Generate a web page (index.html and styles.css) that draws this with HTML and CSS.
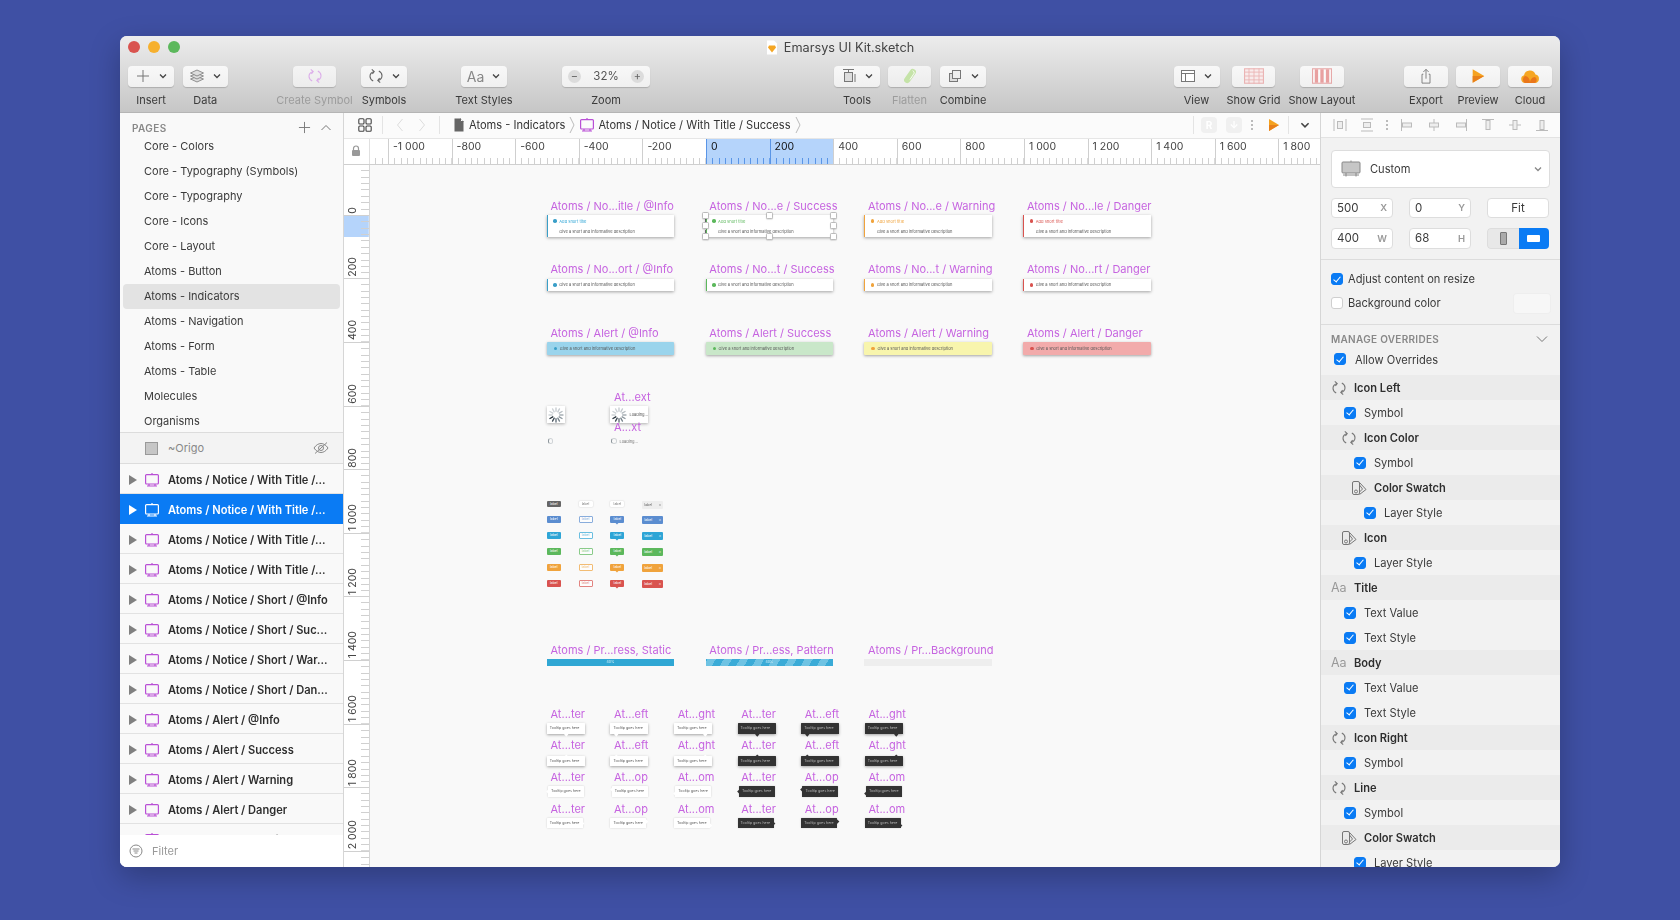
FILE: index.html
```html
<!DOCTYPE html>
<html lang="en">
<head>
<meta charset="utf-8">
<title>Emarsys UI Kit.sketch</title>
<link rel="stylesheet" href="styles.css">
</head>
<body>
<svg class="sprite" width="0" height="0">
  <symbol id="artboard" viewBox="0 0 16 16"><g fill="none" stroke="currentColor" stroke-width="1.2"><rect x="1.6" y="2.6" width="12.8" height="9.4" rx="1"/><path d="M8 1v1.6M3 14h10M5 12v2.5M11 12v2.5"/></g></symbol>
  <symbol id="sym" viewBox="0 0 16 16"><g fill="none" stroke="currentColor" stroke-width="1.1"><path d="M6 3.500C3.400 4.400 2 6.300 2 8.300c0 2 1.300 3.700 3.200 4.700"/><path d="M3.800 1.400 6.200 3.500 4.400 5.800"/><path d="M10 12.500c2.600-.9 4-2.800 4-4.800s-1.300-3.700-3.200-4.700"/><path d="M12.200 14.600 9.800 12.500l1.800-2.300"/></g></symbol>
  <symbol id="swatch" viewBox="0 0 16 16"><g fill="none" stroke="currentColor" stroke-width="1"><rect x="1.500" y="1.500" width="7" height="13" rx="1.500"/><path d="M8.500 2.500 15 9.500l-6.500 5"/><path d="M8.500 5 11.500 9 8.500 12"/><circle cx="5" cy="11.500" r="1.500"/></g></symbol>
  <symbol id="chev" viewBox="0 0 10 10"><path d="M2 3.500 5 6.500 8 3.500" fill="none" stroke="currentColor" stroke-width="1.300"/></symbol>
  <symbol id="spin" viewBox="0 0 24 24"><g stroke-width="2" stroke-linecap="round">
    <path stroke="#c4cacf" d="M12 1.500v5"/><path stroke="#c4cacf" d="m17.200 2.900-2.500 4.300"/><path stroke="#b6bdc2" d="m21.100 6.800-4.300 2.500"/><path stroke="#a6aeb4" d="M22.500 12h-5"/><path stroke="#8f99a0" d="m21.100 17.200-4.300-2.500"/><path stroke="#77838b" d="m17.200 21.100-2.500-4.300"/><path stroke="#5d6a74" d="M12 22.500v-5"/><path stroke="#3f4c56" d="m6.800 21.100 2.500-4.300"/><path stroke="#28343d" d="m2.900 17.200 4.300-2.500"/><path stroke="#cdd2d6" d="M1.500 12h5"/><path stroke="#cdd2d6" d="m2.900 6.800 4.300 2.500"/><path stroke="#cdd2d6" d="m6.800 2.900 2.500 4.300"/></g></symbol>
</svg>

<div class="window">
  <header class="chrome">
    <div class="titlebar">
      <div class="lights"><i class="light red"></i><i class="light yellow"></i><i class="light green"></i></div>
      <div class="title">
        <svg class="doc-ic" viewBox="0 0 12 14"><path d="M1 0h7l3 3v11H1z" fill="#fff"/><path d="M3 5h6l1 2-4 5-4-5z" fill="#f5a623"/></svg>
        <span>Emarsys UI Kit.sketch</span>
      </div>
    </div>
    <div class="tools">
      <div class="tool t-insert"><div class="tbtn"><svg class="ti" viewBox="0 0 16 16"><path d="M8 2v12M2 8h12" stroke="#777" fill="none"/></svg><svg class="tc"><use href="#chev"/></svg></div><span>Insert</span></div>
      <div class="tool t-data"><div class="tbtn"><svg class="ti" viewBox="0 0 16 16"><g fill="#ddd" stroke="#777" stroke-width=".8"><path d="m8 8.500 6.500 2.500L8 14l-6.500-3z"/><path d="m8 5.500 6.500 2.500L8 11 1.500 8z"/><path d="M8 2l6.500 3L8 8 1.500 5z"/></g></svg><svg class="tc"><use href="#chev"/></svg></div><span>Data</span></div>
      <div class="tool t-create off"><div class="tbtn"><svg class="ti pinkic"><use href="#sym"/></svg></div><span>Create Symbol</span></div>
      <div class="tool t-symbols"><div class="tbtn"><svg class="ti grayic"><use href="#sym"/></svg><svg class="tc"><use href="#chev"/></svg></div><span>Symbols</span></div>
      <div class="tool t-text"><div class="tbtn"><b class="aa">Aa</b><svg class="tc"><use href="#chev"/></svg></div><span>Text Styles</span></div>
      <div class="tool t-zoom"><div class="tbtn zoombtn"><i class="zc">−</i><em>32%</em><i class="zc">+</i></div><span>Zoom</span></div>
      <div class="tool t-tools"><div class="tbtn"><svg class="ti" viewBox="0 0 16 16"><g fill="none" stroke="#777"><rect x="3.500" y="4.500" width="8" height="9" fill="#ddd"/><path d="M2 1.500h11M7.500 1.500v3M14 6v8"/></g></svg><svg class="tc"><use href="#chev"/></svg></div><span>Tools</span></div>
      <div class="tool t-flatten off"><div class="tbtn"><svg class="ti big" viewBox="0 0 18 18"><rect x="5.500" y="0" width="7" height="18" rx="3.500" transform="rotate(35 9 9)" fill="#c5e3a8"/><path d="M12 3c2 1 2 3 1 4l-4 6" stroke="#fff" fill="none"/></svg></div><span>Flatten</span></div>
      <div class="tool t-combine"><div class="tbtn"><svg class="ti" viewBox="0 0 16 16"><g fill="#ddd" stroke="#777"><rect x="2.500" y="5.500" width="8" height="8"/><rect x="5.500" y="2.500" width="8" height="8" fill="#eee"/></g></svg><svg class="tc"><use href="#chev"/></svg></div><span>Combine</span></div>
      <div class="tool t-view"><div class="tbtn"><svg class="ti" viewBox="0 0 16 16"><g fill="none" stroke="#777"><rect x="1.500" y="2.500" width="13" height="11" fill="#fff"/><path d="M1.500 5.500h13M5.500 5.500v8"/></g></svg><svg class="tc"><use href="#chev"/></svg></div><span>View</span></div>
      <div class="tool t-grid"><div class="tbtn"><svg class="ti big pale" viewBox="0 0 18 14"><rect x=".500" y=".500" width="17" height="13" fill="#fbe6e6" stroke="#e58a8a"/><path d="M4.500 0v14M9 0v14M13.500 0v14M0 3.500h18M0 7h18M0 10.500h18" stroke="#e58a8a" stroke-width=".8" fill="none"/></svg></div><span>Show Grid</span></div>
      <div class="tool t-layout"><div class="tbtn"><svg class="ti big pale" viewBox="0 0 18 14"><rect x=".500" y=".500" width="17" height="13" fill="#fff" stroke="#d77"/><path d="M2.500 1h3v12h-3zM7.500 1h3v12h-3zM12.500 1h3v12h-3z" fill="#e26a6a"/></svg></div><span>Show Layout</span></div>
      <div class="tool t-export"><div class="tbtn"><svg class="ti big" viewBox="0 0 18 18"><g fill="none" stroke="#777"><path d="M6 7H4.500v10h9V7H12"/><path d="M9 12V1.500M6 4.500l3-3 3 3"/></g></svg></div><span>Export</span></div>
      <div class="tool t-preview"><div class="tbtn"><svg class="ti big" viewBox="0 0 18 18"><path d="M3 1.500 16 9 3 16.500z" fill="#f5a21f"/><path d="M3 9h13L3 16.500z" fill="#e8801a"/></svg></div><span>Preview</span></div>
      <div class="tool t-cloud"><div class="tbtn"><svg class="ti big" viewBox="0 0 20 16"><path d="M5 15a4 4 0 0 1-1-7.800A6 6 0 0 1 15.500 6.500 4.300 4.300 0 0 1 15 15z" fill="#f6a623"/><path d="M5 15a4 4 0 0 1 0-7c3 0 5 3 5 7zM10 15c0-3 2-6 5-6a3.500 3.500 0 0 1 0 6z" fill="#e9761b"/></svg></div><span>Cloud</span></div>
    </div>
  </header>

  <div class="body">
    <aside class="sidebar">
      <div class="pages-head">
        <span>PAGES</span>
        <svg class="ph-plus" viewBox="0 0 14 14"><path d="M7 1v12M1 7h12" stroke="#777" fill="none"/></svg>
        <svg class="ph-up" viewBox="0 0 12 8"><path d="M1.500 6 6 1.500 10.500 6" stroke="#777" fill="none"/></svg>
      </div>
      <div class="pages">
        <ul class="page-list">
          <li>Core - Colors</li>
          <li>Core - Typography (Symbols)</li>
          <li>Core - Typography</li>
          <li>Core - Icons</li>
          <li>Core - Layout</li>
          <li>Atoms - Button</li>
          <li class="cur">Atoms - Indicators</li>
          <li>Atoms - Navigation</li>
          <li>Atoms - Form</li>
          <li>Atoms - Table</li>
          <li>Molecules</li>
          <li>Organisms</li>
        </ul>
      </div>
      <div class="origo">
        <i class="origo-sq"></i><span>~Origo</span>
        <svg class="eye" viewBox="0 0 16 12"><g fill="none" stroke="#888"><path d="M1 6c2-3 4.500-4.500 7-4.500S13 3 15 6c-2 3-4.500 4.500-7 4.500S3 9 1 6z"/><circle cx="8" cy="6" r="2.500"/><path d="M2 11.500 14 .5"/></g></svg>
      </div>
      <ul class="layers">
        <li><i class="tri"></i><svg class="ab"><use href="#artboard"/></svg><span>Atoms / Notice / With Title /...</span></li>
        <li class="on"><i class="tri"></i><svg class="ab"><use href="#artboard"/></svg><span>Atoms / Notice / With Title /...</span></li>
        <li><i class="tri"></i><svg class="ab"><use href="#artboard"/></svg><span>Atoms / Notice / With Title /...</span></li>
        <li><i class="tri"></i><svg class="ab"><use href="#artboard"/></svg><span>Atoms / Notice / With Title /...</span></li>
        <li><i class="tri"></i><svg class="ab"><use href="#artboard"/></svg><span>Atoms / Notice / Short / @Info</span></li>
        <li><i class="tri"></i><svg class="ab"><use href="#artboard"/></svg><span>Atoms / Notice / Short / Suc...</span></li>
        <li><i class="tri"></i><svg class="ab"><use href="#artboard"/></svg><span>Atoms / Notice / Short / War...</span></li>
        <li><i class="tri"></i><svg class="ab"><use href="#artboard"/></svg><span>Atoms / Notice / Short / Dan...</span></li>
        <li><i class="tri"></i><svg class="ab"><use href="#artboard"/></svg><span>Atoms / Alert / @Info</span></li>
        <li><i class="tri"></i><svg class="ab"><use href="#artboard"/></svg><span>Atoms / Alert / Success</span></li>
        <li><i class="tri"></i><svg class="ab"><use href="#artboard"/></svg><span>Atoms / Alert / Warning</span></li>
        <li><i class="tri"></i><svg class="ab"><use href="#artboard"/></svg><span>Atoms / Alert / Danger</span></li>
        <li><i class="tri"></i><svg class="ab"><use href="#artboard"/></svg><span>Atoms / Loader / Default / Text</span></li>
      </ul>
      <div class="filter">
        <svg class="filter-ic" viewBox="0 0 14 14"><g fill="none" stroke="#888"><circle cx="7" cy="7" r="6"/><path d="M3.500 5h7M4.500 7h5M5.500 9h3"/></g></svg>
        <span>Filter</span>
      </div>
    </aside>

    <main class="main">
      <div class="crumbs">
        <svg class="cr-grid" viewBox="0 0 14 14"><g fill="none" stroke="#444" stroke-width="1.100"><rect x=".8" y=".8" width="5.200" height="5.200" rx="1"/><rect x="8" y=".8" width="5.200" height="5.200" rx="1"/><rect x=".8" y="8" width="5.200" height="5.200" rx="1"/><rect x="8" y="8" width="5.200" height="5.200" rx="1"/></g></svg>
        <i class="cr-sep s1"></i>
        <svg class="cr-nav n1" viewBox="0 0 8 14"><path d="M6.500 1 1.500 7l5 6" stroke="#ddd" fill="none"/></svg>
        <svg class="cr-nav n2" viewBox="0 0 8 14"><path d="M1.500 1l5 6-5 6" stroke="#ddd" fill="none"/></svg>
        <i class="cr-sep s2"></i>
        <svg class="cr-doc" viewBox="0 0 10 14"><path d="M.5.500h6l3 3v10H.5z" fill="#666"/><path d="M6.500.500v3h3" fill="#fff" stroke="#666"/></svg>
        <span class="cr-t1">Atoms - Indicators</span>
        <svg class="cr-arrow" viewBox="0 0 6 18"><path d="M1 1l4 8-4 8" stroke="#bbb" fill="none"/></svg>
        <svg class="cr-ab"><use href="#artboard"/></svg>
        <span class="cr-t2">Atoms / Notice / With Title / Success</span>
        <svg class="cr-arrow" viewBox="0 0 6 18"><path d="M1 1l4 8-4 8" stroke="#bbb" fill="none"/></svg>
        <div class="cr-right">
          <i class="cr-sep"></i>
          <b class="ghost g1">R</b>
          <b class="ghost g2">↓</b>
          <i class="vdots"></i>
          <svg class="cr-play" viewBox="0 0 12 14"><path d="M1 1l10 6-10 6z" fill="#f5a21f"/><path d="M1 7h10L1 13z" fill="#e8801a"/></svg>
          <i class="cr-sep s3"></i>
          <svg class="cr-chev"><use href="#chev"/></svg>
        </div>
      </div>

      <div class="hruler">
        <div class="lock"><svg viewBox="0 0 10 12"><path d="M2.500 5V3.500a2.500 2.500 0 0 1 5 0V5" fill="none" stroke="#999" stroke-width="1.200"/><rect x="1" y="5" width="8" height="6" rx="1" fill="#999"/></svg></div>
        <div class="rc stub"></div>
        <div class="rc">-1 000</div><div class="rc">-800</div><div class="rc">-600</div><div class="rc">-400</div><div class="rc">-200</div>
        <div class="rc sel">0</div><div class="rc sel">200</div>
        <div class="rc">400</div><div class="rc">600</div><div class="rc">800</div><div class="rc">1 000</div><div class="rc">1 200</div><div class="rc">1 400</div><div class="rc">1 600</div><div class="rc">1 800</div>
      </div>

      <div class="stage">
        <div class="vruler">
          <div class="vc first"><span>0</span></div>
          <div class="vc sel"><span>200</span></div>
          <div class="vc"><span>400</span></div>
          <div class="vc"><span>600</span></div>
          <div class="vc"><span>800</span></div>
          <div class="vc"><span>1 000</span></div>
          <div class="vc"><span>1 200</span></div>
          <div class="vc"><span>1 400</span></div>
          <div class="vc"><span>1 600</span></div>
          <div class="vc"><span>1 800</span></div>
          <div class="vc"><span>2 000</span></div>
          <div class="vc"></div>
        </div>

        <div class="canvas">
          <div class="brow">
            <div class="bcol"><p class="lbl">Atoms / No...itle / @Info</p><div class="notice tall info"><b class="dot"></b><div class="ntx"><em>Add short title</em><span>Give a short and informative description</span></div></div></div>
            <div class="bcol"><p class="lbl">Atoms / No...e / Success</p><div class="notice tall ok selbox"><b class="dot"></b><div class="ntx"><em>Add short title</em><span>Give a short and informative description</span></div>
              <i class="h h1"></i><i class="h h2"></i><i class="h h3"></i><i class="h h4"></i><i class="h h5"></i><i class="h h6"></i><i class="h h7"></i><i class="h h8"></i></div></div>
            <div class="bcol"><p class="lbl">Atoms / No...e / Warning</p><div class="notice tall warn"><b class="dot"></b><div class="ntx"><em>Add short title</em><span>Give a short and informative description</span></div></div></div>
            <div class="bcol"><p class="lbl">Atoms / No...le / Danger</p><div class="notice tall bad"><b class="dot"></b><div class="ntx"><em>Add short title</em><span>Give a short and informative description</span></div></div></div>
          </div>
          <div class="brow">
            <div class="bcol"><p class="lbl">Atoms / No...ort / @Info</p><div class="notice info"><b class="dot"></b><span>Give a short and informative description</span></div></div>
            <div class="bcol"><p class="lbl">Atoms / No...t / Success</p><div class="notice ok"><b class="dot"></b><span>Give a short and informative description</span></div></div>
            <div class="bcol"><p class="lbl">Atoms / No...t / Warning</p><div class="notice warn"><b class="dot"></b><span>Give a short and informative description</span></div></div>
            <div class="bcol"><p class="lbl">Atoms / No...rt / Danger</p><div class="notice bad"><b class="dot"></b><span>Give a short and informative description</span></div></div>
          </div>
          <div class="brow">
            <div class="bcol"><p class="lbl">Atoms / Alert / @Info</p><div class="notice alert info"><b class="dot"></b><span>Give a short and informative description</span></div></div>
            <div class="bcol"><p class="lbl">Atoms / Alert / Success</p><div class="notice alert ok"><b class="dot"></b><span>Give a short and informative description</span></div></div>
            <div class="bcol"><p class="lbl">Atoms / Alert / Warning</p><div class="notice alert warn"><b class="dot"></b><span>Give a short and informative description</span></div></div>
            <div class="bcol"><p class="lbl">Atoms / Alert / Danger</p><div class="notice alert bad"><b class="dot"></b><span>Give a short and informative description</span></div></div>
          </div>

          <div class="loaders">
            <div class="lcol first">
              <div class="lbox"><svg class="spin"><use href="#spin"/></svg></div>
              <div class="lsmall"><i class="ring"></i></div>
            </div>
            <div class="lcol">
              <p class="lbl">At...ext</p>
              <div class="lbox wide"><svg class="spin"><use href="#spin"/></svg><span>Loading...</span></div>
              <p class="lbl after">A...xt</p>
              <div class="lsmall"><i class="ring"></i><span>Loading...</span></div>
            </div>
          </div>

          <div class="tags">
            <b class="tag gray">label</b><b class="tag plain">label</b><b class="tag plain">label</b><b class="tag big lite">label<i>×</i></b>
            <b class="tag blue">label</b><b class="tag line blue-l">label</b><b class="tag blue pin">label</b><b class="tag big blue">label<i>×</i></b>
            <b class="tag cyan">label</b><b class="tag line cyan-l">label</b><b class="tag cyan pin">label</b><b class="tag big cyan">label<i>×</i></b>
            <b class="tag green">label</b><b class="tag line green-l">label</b><b class="tag green pin">label</b><b class="tag big green">label<i>×</i></b>
            <b class="tag orange">label</b><b class="tag line orange-l">label</b><b class="tag orange pin">label</b><b class="tag big orange">label<i>×</i></b>
            <b class="tag red">label</b><b class="tag line red-l">label</b><b class="tag red pin">label</b><b class="tag big red">label<i>×</i></b>
          </div>

          <div class="brow prog">
            <div class="bcol"><p class="lbl">Atoms / Pr...ress, Static</p><div class="bar">40%</div></div>
            <div class="bcol"><p class="lbl">Atoms / Pr...ess, Pattern</p><div class="bar stripes">40%</div></div>
            <div class="bcol"><p class="lbl">Atoms / Pr...Background</p><div class="bar empty"></div></div>
          </div>

          <div class="tips">
            <div class="tc1 r1"><p class="lbl">At...ter</p><div class="tip b-c">Tooltip goes here</div></div>
            <div class="tc1 r1"><p class="lbl">At...eft</p><div class="tip b-l">Tooltip goes here</div></div>
            <div class="tc1 r1"><p class="lbl">At...ght</p><div class="tip b-r">Tooltip goes here</div></div>
            <div class="tc1 r1"><p class="lbl">At...ter</p><div class="tip dark b-c">Tooltip goes here</div></div>
            <div class="tc1 r1"><p class="lbl">At...eft</p><div class="tip dark b-l">Tooltip goes here</div></div>
            <div class="tc1 r1"><p class="lbl">At...ght</p><div class="tip dark b-r">Tooltip goes here</div></div>

            <div class="tc1 r2"><p class="lbl">At...ter</p><div class="tip u-c">Tooltip goes here</div></div>
            <div class="tc1 r2"><p class="lbl">At...eft</p><div class="tip u-l">Tooltip goes here</div></div>
            <div class="tc1 r2"><p class="lbl">At...ght</p><div class="tip u-r">Tooltip goes here</div></div>
            <div class="tc1 r2"><p class="lbl">At...ter</p><div class="tip dark u-c">Tooltip goes here</div></div>
            <div class="tc1 r2"><p class="lbl">At...eft</p><div class="tip dark u-l">Tooltip goes here</div></div>
            <div class="tc1 r2"><p class="lbl">At...ght</p><div class="tip dark u-r">Tooltip goes here</div></div>

            <div class="tc1 r3"><p class="lbl">At...ter</p><div class="tip l-c">Tooltip goes here</div></div>
            <div class="tc1 r3"><p class="lbl">At...op</p><div class="tip l-t">Tooltip goes here</div></div>
            <div class="tc1 r3"><p class="lbl">At...om</p><div class="tip l-b">Tooltip goes here</div></div>
            <div class="tc1 r3"><p class="lbl">At...ter</p><div class="tip dark l-c">Tooltip goes here</div></div>
            <div class="tc1 r3"><p class="lbl">At...op</p><div class="tip dark l-t">Tooltip goes here</div></div>
            <div class="tc1 r3"><p class="lbl">At...om</p><div class="tip dark l-b">Tooltip goes here</div></div>

            <div class="tc1 r4"><p class="lbl">At...ter</p><div class="tip x-c">Tooltip goes here</div></div>
            <div class="tc1 r4"><p class="lbl">At...op</p><div class="tip x-t">Tooltip goes here</div></div>
            <div class="tc1 r4"><p class="lbl">At...om</p><div class="tip x-b">Tooltip goes here</div></div>
            <div class="tc1 r4"><p class="lbl">At...ter</p><div class="tip dark x-c">Tooltip goes here</div></div>
            <div class="tc1 r4"><p class="lbl">At...op</p><div class="tip dark x-t">Tooltip goes here</div></div>
            <div class="tc1 r4"><p class="lbl">At...om</p><div class="tip dark x-b">Tooltip goes here</div></div>
          </div>
        </div>
      </div>
    </main>

    <aside class="inspector">
      <div class="alignbar">
        <svg class="al a1" viewBox="0 0 14 14"><path d="M1 1v12M13 1v12" stroke="#bbb" fill="none"/><rect x="4.500" y="3.500" width="5" height="7" fill="#eee" stroke="#bbb"/></svg>
        <svg class="al a2" viewBox="0 0 14 14"><path d="M1 1h12M1 13h12" stroke="#bbb" fill="none"/><rect x="3.500" y="4.500" width="7" height="5" fill="#eee" stroke="#bbb"/></svg>
        <i class="vdots a3"></i>
        <svg class="al a4" viewBox="0 0 14 14"><path d="M1.500 1v12" stroke="#bbb"/><rect x="2.500" y="5" width="9" height="4" fill="#eee" stroke="#bbb"/></svg>
        <svg class="al a5" viewBox="0 0 14 14"><path d="M7 1v12" stroke="#bbb"/><rect x="2.500" y="5" width="9" height="4" fill="#eee" stroke="#bbb"/></svg>
        <svg class="al a6" viewBox="0 0 14 14"><path d="M12.500 1v12" stroke="#bbb"/><rect x="2.500" y="5" width="9" height="4" fill="#eee" stroke="#bbb"/></svg>
        <svg class="al a7" viewBox="0 0 14 14"><path d="M1 1.500h12" stroke="#bbb"/><rect x="5" y="2.500" width="4" height="9" fill="#eee" stroke="#bbb"/></svg>
        <svg class="al a8" viewBox="0 0 14 14"><path d="M1 7h12" stroke="#bbb"/><rect x="5" y="2.500" width="4" height="9" fill="#eee" stroke="#bbb"/></svg>
        <svg class="al a9" viewBox="0 0 14 14"><path d="M1 12.500h12" stroke="#bbb"/><rect x="5" y="2.500" width="4" height="9" fill="#eee" stroke="#bbb"/></svg>
      </div>
      <div class="props">
        <div class="preset">
          <svg class="preset-ic" viewBox="0 0 20 18"><rect x="1" y="2" width="18" height="11" rx="1" fill="#c6c6c6" stroke="#888"/><path d="M10 .5V2M2 15h16M5 13v3.500M15 13v3.500" stroke="#888" fill="none"/></svg>
          <span>Custom</span>
          <svg class="preset-ch"><use href="#chev"/></svg>
        </div>
        <div class="grid3">
          <div class="field"><span>500</span><i>X</i></div>
          <div class="field"><span>0</span><i>Y</i></div>
          <div class="field fit">Fit</div>
          <div class="field"><span>400</span><i>W</i></div>
          <div class="field"><span>68</span><i>H</i></div>
          <div class="seg"><span class="seg-a"><i></i></span><span class="seg-b"><i></i></span></div>
        </div>
      </div>
      <div class="opts">
        <div class="opt"><i class="cb on"></i><span>Adjust content on resize</span></div>
        <div class="opt"><i class="cb"></i><span>Background color</span><b class="bgsw"></b></div>
      </div>
      <div class="ov-head"><span>MANAGE OVERRIDES</span><svg viewBox="0 0 12 8"><path d="M1 1.500 6 6.500 11 1.500" stroke="#777" fill="none"/></svg></div>
      <div class="allow"><i class="cb on"></i><span>Allow Overrides</span></div>
      <div class="ov-list">
        <div class="hd"><svg class="hi"><use href="#sym"/></svg><b>Icon Left</b></div>
        <div class="ck l1"><i class="cb on"></i><span>Symbol</span></div>
        <div class="hd l1"><svg class="hi"><use href="#sym"/></svg><b>Icon Color</b></div>
        <div class="ck l2"><i class="cb on"></i><span>Symbol</span></div>
        <div class="hd l2"><svg class="hi"><use href="#swatch"/></svg><b>Color Swatch</b></div>
        <div class="ck l3"><i class="cb on"></i><span>Layer Style</span></div>
        <div class="hd l1"><svg class="hi"><use href="#swatch"/></svg><b>Icon</b></div>
        <div class="ck l2"><i class="cb on"></i><span>Layer Style</span></div>
        <div class="hd"><em class="hi-aa">Aa</em><b>Title</b></div>
        <div class="ck l1"><i class="cb on"></i><span>Text Value</span></div>
        <div class="ck l1"><i class="cb on"></i><span>Text Style</span></div>
        <div class="hd"><em class="hi-aa">Aa</em><b>Body</b></div>
        <div class="ck l1"><i class="cb on"></i><span>Text Value</span></div>
        <div class="ck l1"><i class="cb on"></i><span>Text Style</span></div>
        <div class="hd"><svg class="hi"><use href="#sym"/></svg><b>Icon Right</b></div>
        <div class="ck l1"><i class="cb on"></i><span>Symbol</span></div>
        <div class="hd"><svg class="hi"><use href="#sym"/></svg><b>Line</b></div>
        <div class="ck l1"><i class="cb on"></i><span>Symbol</span></div>
        <div class="hd l1"><svg class="hi"><use href="#swatch"/></svg><b>Color Swatch</b></div>
        <div class="ck l2"><i class="cb on"></i><span>Layer Style</span></div>
      </div>
    </aside>
  </div>
</div>
</body>
</html>
```

FILE: styles.css
```css
* { box-sizing: border-box; margin: 0; padding: 0; }
html, body { height: 100%; overflow: hidden; }
body {
  background: #3f50a4;
  font-family: Inter, "Noto Sans", "Liberation Sans", sans-serif;
  color: #333;
}
.sprite { position: absolute; }
i, em, b { font-style: normal; }
ul { list-style: none; }

.window {
  width: 1440px; height: 831px;
  margin: 36px 0 0 120px;
  border-radius: 7px;
  overflow: hidden;
  display: flex; flex-direction: column;
  background: #f9f9f9;
  box-shadow: 0 10px 30px rgba(0,0,0,.25);
  filter: blur(.3px);
}

/* chrome */
.chrome {
  height: 76.500px; flex: none;
  background: linear-gradient(#ececec, #c6c6c6);
  border-bottom: 1px solid #b5b5b5;
}
.titlebar { height: 29.500px; position: relative; display: flex; justify-content: center; }
.lights { position: absolute; left: 8px; top: 5px; display: flex; gap: 8px; }
.light { width: 12px; height: 12px; border-radius: 50%; }
.red { background: #f0524f; } .yellow { background: #f6b02e; } .green { background: #29c041; }
.title { display: flex; align-items: center; gap: 6px; height: 22px; font-size: 12.700px; color: #444; margin-left: 0; }
.doc-ic { width: 12px; height: 15px; }

.tools { display: flex; padding-left: 8px; }
.tool { display: flex; flex-direction: column; align-items: center; flex: none; font-size: 11px; color: #3a3a3a; }
.tool > span { margin-top: 6px; line-height: 14px; white-space: nowrap; }
.tool.off > span { color: #9c9c9c; }
.tbtn {
  width: 100%; height: 21.500px;
  display: flex; align-items: center; justify-content: center; gap: 7px;
  background: linear-gradient(#f8f8f8, #f0f0f0);
  border-radius: 4px;
  box-shadow: 0 1px 1px rgba(0,0,0,.18);
}
.off .tbtn { background: linear-gradient(#f4f4f4, #ececec); }
.ti { width: 16px; height: 16px; }
.ti.big { width: 20px; height: 16px; }
.ti.pale { opacity: .6; }
.tc { width: 10px; height: 10px; color: #444; }
.pinkic { color: #dcaeea; }
.grayic { color: #666; }
.aa { font-weight: 400; font-size: 14px; color: #888; }
.zoombtn { justify-content: space-between; padding: 0 6px; font-size: 11.500px; color: #555; }
.zc { width: 13px; height: 13px; line-height: 12px; border-radius: 50%; background: #dcdcdc; text-align: center; font-size: 11px; color: #666; }
.t-insert { width: 46px; }
.t-data { width: 45.500px; margin-left: 8.500px; }
.t-create { width: 43px; margin-left: 65px; }
.t-symbols { width: 46px; margin-left: 25px; }
.t-text { width: 46px; margin-left: 54px; }
.t-zoom { width: 88px; margin-left: 55px; }
.t-tools { width: 46px; margin-left: 184px; }
.t-flatten { width: 43px; margin-left: 8px; }
.t-combine { width: 46px; margin-left: 9px; }
.t-view { width: 46px; margin-left: 187.500px; }
.t-grid { width: 43px; margin-left: 12.500px; }
.t-layout { width: 44px; margin-left: 25px; }
.t-export { width: 44px; margin-left: 60px; }
.t-preview { width: 44px; margin-left: 8px; }
.t-cloud { width: 44px; margin-left: 8px; }

.body { flex: 1; display: flex; min-height: 0; }

/* sidebar */
.sidebar {
  width: 224px; flex: none;
  display: flex; flex-direction: column;
  background: #f9f9f9;
  border-right: 1px solid #d6d6d6;
}
.pages-head {
  height: 27.500px; flex: none;
  display: flex; align-items: center;
  padding: 3px 0 0 12px;
  font-size: 10px; font-weight: 600; color: #888; letter-spacing: .4px;
}
.pages-head span { flex: 1; }
.ph-plus { width: 13px; height: 13px; margin-right: 9px; }
.ph-up { width: 12px; height: 8px; margin-right: 11px; }
.pages { height: 292px; flex: none; overflow: hidden; }
.page-list { margin-top: -6.500px; padding: 0 3px; }
.page-list li { height: 25px; line-height: 25px; padding-left: 21px; font-size: 11px; color: #3a3a3a; border-radius: 4px; }
.page-list li.cur { background: #e3e3e3; }
.origo {
  height: 32px; flex: none;
  display: flex; align-items: center;
  background: #f3f3f3;
  border-top: 1px solid #dcdcdc; border-bottom: 1px solid #dcdcdc;
  padding-left: 25px;
  font-size: 11px; color: #888;
}
.origo-sq { width: 13px; height: 13px; background: #c6c6c6; border: 1px solid #999; margin-right: 10px; }
.origo span { flex: 1; }
.eye { width: 16px; height: 12px; margin-right: 14px; }
.layers { flex: 1; overflow: hidden; min-height: 0; }
.layers li {
  height: 30px; flex: none;
  display: flex; align-items: center;
  padding: 2px 0 0 9px;
  border-bottom: 1px solid #e2e2e2;
  font-size: 11.100px; font-weight: 600; color: #2e2e2e; white-space: nowrap;
}
.tri { width: 0; height: 0; border-left: 8px solid #808080; border-top: 5px solid transparent; border-bottom: 5px solid transparent; margin-right: 7px; }
.ab { width: 16px; height: 16px; color: #b94fd6; margin-right: 8px; }
.layers li.on { background: #0a7bf4; color: #fff; border-bottom-color: #0a7bf4; }
.layers li.on .tri { border-left-color: #fff; }
.layers li.on .ab { color: #fff; }
.filter {
  height: 32px; flex: none; background: #fff;
  display: flex; align-items: center; padding-left: 9px;
  font-size: 11px; color: #999;
}
.filter-ic { width: 14px; height: 14px; margin-right: 9px; }

/* main */
.main { flex: 1; min-width: 0; display: flex; flex-direction: column; }
.crumbs {
  height: 25px; flex: none;
  display: flex; align-items: center;
  background: #fbfbfb;
  font-size: 11.100px; color: #333; white-space: nowrap;
  padding-left: 14px;
}
.cr-grid { width: 14px; height: 14px; }
.cr-sep { width: 1px; height: 18px; background: #e4e4e4; }
.s1 { margin-left: 10px; }
.cr-nav { width: 8px; height: 14px; }
.n1 { margin-left: 13px; }
.n2 { margin-left: 14px; }
.s2 { margin-left: 13px; }
.cr-doc { width: 10px; height: 14px; margin-left: 14px; }
.cr-t1 { margin-left: 5px; }
.cr-arrow { width: 6px; height: 18px; margin-left: 4px; }
.cr-ab { width: 16px; height: 16px; color: #b94fd6; margin-left: 4px; }
.cr-t2 { margin-left: 3px; }
.cr-right { margin-left: auto; display: flex; align-items: center; height: 100%; padding-right: 9px; }
.ghost { width: 16px; height: 16px; background: #f0f0f0; border-radius: 4px; color: #fff; font-size: 10px; text-align: center; line-height: 16px; }
.g1 { margin-left: 7px; }
.g2 { margin-left: 9px; }
.vdots { width: 2px; height: 10px; background: repeating-linear-gradient(#bbb 0 2px, transparent 2px 4px); margin-left: 9px; }
.cr-play { width: 12px; height: 14px; margin-left: 15px; }
.s3 { margin-left: 8px; }
.cr-chev { width: 12px; height: 12px; color: #444; margin-left: 10px; }

.hruler {
  height: 27px; flex: none;
  display: flex;
  background: #fff;
  border-top: 1px solid #e6e6e6; border-bottom: 1px solid #cfcfcf;
  overflow: hidden;
}
.lock { width: 25.500px; flex: none; display: flex; align-items: center; justify-content: center; border-right: 1px solid #e0e0e0; }
.lock svg { width: 10px; height: 12px; }
.rc {
  width: 63.600px; flex: none;
  padding: 1px 0 0 4px;
  font-size: 10.500px; line-height: 14px; color: #444; white-space: nowrap;
  border-left: 1px solid #cfcfcf;
  background: repeating-linear-gradient(to right, transparent 0 5.360px, #d0d0d0 5.360px 6.360px) bottom / 100% 6px no-repeat;
}
.rc.stub { width: 18.500px; border-left: 0; }
.rc.sel {
  color: #111;
  border-left-color: #5a95e6;
  background: repeating-linear-gradient(to right, transparent 0 5.360px, #5a95e6 5.360px 6.360px) bottom / 100% 6px no-repeat, #b5d4fb;
}

.stage { flex: 1; min-height: 0; display: flex; }
.vruler { width: 25.500px; flex: none; background: #fff; border-right: 1px solid #d6d6d6; overflow: hidden; }
.vc {
  height: 63.600px; position: relative;
  display: flex; align-items: flex-end; padding: 0 0 1.500px 2px;
  font-size: 10.500px; color: #444;
  border-bottom: 1px solid #d0d0d0;
  background: repeating-linear-gradient(transparent 0 5.360px, #d0d0d0 5.360px 6.360px) right / 8px 100% no-repeat;
}
.vc.first { height: 51.300px; }
.vc span { writing-mode: vertical-rl; transform: rotate(180deg); line-height: 14px; white-space: nowrap; }
.vc.sel {
  background: repeating-linear-gradient(transparent 0 5.360px, #d0d0d0 5.360px 6.360px) right / 8px 100% no-repeat,
              linear-gradient(#b5d4fb, #b5d4fb) top / 100% 21px no-repeat;
}

/* canvas */
.canvas { flex: 1; min-width: 0; overflow: hidden; background: #f9f9f9; padding: 34px 0 0 177.300px; }
.lbl { font-size: 11px; line-height: 14px; color: #c664e0; padding-left: 3.700px; white-space: nowrap; }
.brow { height: 63.700px; display: flex; }
.bcol { width: 158.800px; flex: none; }
.notice {
  width: 127.500px; height: 12.500px; margin-top: 2.500px; position: relative;
  display: flex; align-items: center; gap: 2.500px;
  padding-left: 5.500px;
  background: #fff;
  border-left: 1.500px solid #888;
  box-shadow: 0 1px 3px rgba(0,0,0,.35);
  font-size: 4px; color: #555; white-space: nowrap;
}
.notice.tall { height: 21.500px; align-items: flex-start; padding-top: 4px; }
.ntx { display: flex; flex-direction: column; gap: 4.500px; }
.ntx em { font-size: 4.100px; }
.dot { width: 3.500px; height: 3.500px; border-radius: 50%; background: #888; flex: none; }
.info { border-left-color: #3a9fc8; } .info .dot { background: #3a9fc8; } .info em { color: #2ea5d6; }
.ok { border-left-color: #5cb85c; } .ok .dot { background: #5cb85c; } .ok em { color: #5cb85c; }
.warn { border-left-color: #f0a33c; } .warn .dot { background: #f0a33c; } .warn em { color: #f0a33c; }
.bad { border-left-color: #d9534f; } .bad .dot { background: #d9534f; } .bad em { color: #d9534f; }
.alert { border-left: 0; padding-left: 7px; border-radius: 1px; }
.alert.info { background: #9ad4ec; }
.alert.ok { background: #c9e7c9; }
.alert.warn { background: #f8f5ad; }
.alert.bad { background: #f2abab; }
.h {
  position: absolute; width: 7px; height: 7px; border-radius: 1.500px;
  background: #fff; border: 1px solid #bbb; box-shadow: 0 .5px 1px rgba(0,0,0,.2);
}
.h1 { left: -5px; top: -3.500px; } .h2 { left: 59px; top: -3.500px; } .h3 { right: -3.500px; top: -3.500px; }
.h4 { left: -5px; top: 7.250px; } .h5 { right: -3.500px; top: 7.250px; }
.h6 { left: -5px; bottom: -3.500px; } .h7 { left: 59px; bottom: -3.500px; } .h8 { right: -3.500px; bottom: -3.500px; }
.selbox::before, .selbox::after { content: ""; position: absolute; left: -2px; width: 1px; height: 3px; background: #666; }
.selbox::before { top: 3.500px; }
.selbox::after { top: 14.500px; }

.loaders { height: 106.500px; display: flex; }
.lcol { width: 63.600px; flex: none; }
.lcol.first { padding-top: 16.500px; }
.lbox { width: 18px; height: 17px; background: #fff; box-shadow: 0 1px 3px rgba(0,0,0,.3); display: flex; align-items: center; padding-left: 1px; font-size: 4px; color: #555; }
.lcol > .lbl + .lbox { margin-top: 2.500px; }
.lbox.wide { width: 37.500px; gap: 2px; }
.spin { width: 16px; height: 16px; flex: none; }
.lbl.after { margin-top: -3px; }
.lsmall { display: flex; align-items: center; gap: 2.500px; height: 7px; margin-top: 14.500px; font-size: 4px; color: #777; padding-left: 1px; }
.lbl.after + .lsmall { margin-top: 3.500px; }
.ring { width: 5.500px; height: 5.500px; border-radius: 50%; border: 1px solid #cfd3d6; border-left-color: #8d969c; flex: none; }

.tags { display: grid; grid-template-columns: repeat(4, 31.800px); grid-auto-rows: 15.900px; height: 146.500px; align-items: start; }
.tag { width: 14px; height: 6.500px; margin-top: 4.500px; border-radius: 1px; font-size: 3.400px; font-weight: 400; line-height: 6.500px; text-align: center; color: #fff; position: relative; }
.tag.big { width: 21px; height: 8px; line-height: 8px; margin-top: 4.500px; display: flex; justify-content: space-between; padding: 0 2px; font-size: 3.600px; }
.gray { background: #666; }
.plain { background: #fff; color: #777; box-shadow: 0 0 1.500px rgba(0,0,0,.25); }
.lite { background: #eee; color: #666; }
.blue { background: #5b8dd0; } .cyan { background: #2ea5d6; } .green { background: #5cb85c; } .orange { background: #f0a33c; } .red { background: #d9534f; }
.line { background: #fff; border: .5px solid; line-height: 5.500px; opacity: .7; }
.blue-l { color: #5b8dd0; } .cyan-l { color: #2ea5d6; } .green-l { color: #5cb85c; } .orange-l { color: #f0a33c; } .red-l { color: #d9534f; }
.pin::after { content: ""; position: absolute; left: 6px; bottom: -1px; width: 2px; height: 2px; background: inherit; transform: rotate(45deg); }

.prog { height: 64px; }
.bar { width: 127.500px; height: 6.500px; margin-top: 2.500px; background: #30a7d4; color: #d8f0f8; font-size: 3.500px; line-height: 6.500px; text-align: center; }
.stripes { background: repeating-linear-gradient(-60deg, #3aabd7 0 7px, #6fc3e3 7px 14px); }
.bar.empty { background: #eeeeee; }

.tips { display: grid; grid-template-columns: repeat(6, 63.600px); grid-auto-rows: 31.800px; }
.tc1 { position: relative; }
.tip {
  position: relative; width: 38px; height: 11px; margin-top: 2.500px;
  background: #fff; color: #555;
  font-size: 3.600px; line-height: 11px; padding-left: 3px; white-space: nowrap;
  box-shadow: 0 1px 3px rgba(0,0,0,.35);
  border-radius: .5px;
}
.tip.dark { background: #333; color: #bbb; }
.r2 .tip { margin-top: 3.500px; height: 10px; line-height: 10px; }
.r3 .tip { width: 36px; height: 10.500px; line-height: 10.500px; margin: 2px 0 0 1.300px; padding-left: 3px; box-shadow: 0 0 2px rgba(0,0,0,.2); }
.r4 .tip { width: 36px; height: 10px; line-height: 10px; margin-top: 2.500px; box-shadow: 0 0 2px rgba(0,0,0,.2); }
.tip::after { content: ""; position: absolute; width: 2.500px; height: 2.500px; background: inherit; transform: rotate(45deg); }
.b-c::after { bottom: -1.200px; left: 18px; } .b-l::after { bottom: -1.200px; left: 5px; } .b-r::after { bottom: -1.200px; right: 5px; }
.u-c::after { top: -1.200px; left: 18px; } .u-l::after { top: -1.200px; left: 5px; } .u-r::after { top: -1.200px; right: 5px; }
.l-c::after { left: -1.200px; top: 4px; } .l-t::after { left: -1.200px; top: 2px; } .l-b::after { left: -1.200px; top: 6px; }
.x-c::after { right: -1.200px; top: 4px; } .x-t::after { right: -1.200px; top: 2px; } .x-b::after { right: -1.200px; top: 6px; }

/* inspector */
.inspector {
  width: 240px; flex: none;
  background: #f2f2f2;
  border-left: 1px solid #d6d6d6;
  display: flex; flex-direction: column; overflow: hidden;
  font-size: 11.100px; color: #3a3a3a;
}
.alignbar {
  height: 25px; flex: none;
  display: flex; align-items: center;
  background: #fbfbfb;
  border-bottom: 1px solid #e3e3e3;
  padding-left: 12px;
}
.al { width: 14px; height: 14px; flex: none; }
.a2 { margin-left: 13px; }
.a3 { margin-left: 12px; flex: none; }
.a4 { margin-left: 12px; }
.a5, .a6, .a7, .a8, .a9 { margin-left: 13px; }
.props { padding: 12px 10px 0 10px; }
.preset {
  height: 38px;
  display: flex; align-items: center;
  background: #fff; border: 1px solid #ddd; border-radius: 4px;
  padding-left: 9px;
}
.preset-ic { width: 20px; height: 18px; margin-right: 9px; }
.preset span { flex: 1; }
.preset-ch { width: 10px; height: 10px; color: #888; margin-right: 6px; }
.grid3 { display: grid; grid-template-columns: 62px 62px 62px; column-gap: 16px; row-gap: 10px; margin-top: 10px; }
.field {
  height: 20.500px;
  display: flex; align-items: center; justify-content: space-between;
  background: #fff; border: 1px solid #ddd; border-radius: 4px;
  padding: 0 5px;
  font-size: 11.500px;
}
.field i { font-size: 9.500px; font-weight: 600; color: #999; }
.field.fit { justify-content: center; }
.seg { display: flex; height: 21px; border-radius: 4px; overflow: hidden; }
.seg span { flex: 1; display: flex; align-items: center; justify-content: center; }
.seg-a { background: #e8e8e8; border: 1px solid #ddd; border-right: 0; border-radius: 4px 0 0 4px; }
.seg-a i { width: 7px; height: 13px; background: #aaa; border: 1px solid #777; border-radius: 1px; }
.seg-b { background: #0a7bf4; }
.seg-b i { width: 13px; height: 7px; background: #fff; border-radius: 1px; }
.opts { margin-top: 10px; border-top: 1px solid #dcdcdc; border-bottom: 1px solid #dcdcdc; padding: 7px 0 9px 10px; }
.opt { height: 24px; display: flex; align-items: center; gap: 5px; }
.opt span { flex: 1; }
.bgsw { width: 36px; height: 19px; background: #f7f7f7; border-radius: 3px; margin-right: 10px; box-shadow: 0 0 0 1px #eee; }
.cb { width: 12px; height: 12px; flex: none; border-radius: 3px; background: #fff; border: 1px solid #cfcfcf; position: relative; }
.cb.on { background: #0a7bf4; border-color: #0a7bf4; }
.cb.on::after { content: ""; position: absolute; left: 3.200px; top: .6px; width: 3px; height: 6px; border: solid #fff; border-width: 0 1.500px 1.500px 0; transform: rotate(40deg); }
.ov-head { height: 28px; flex: none; display: flex; align-items: center; justify-content: space-between; padding: 0 12px 0 10px; font-size: 10px; font-weight: 600; letter-spacing: .3px; color: #888; }
.ov-head svg { width: 12px; height: 8px; }
.allow { height: 22px; flex: none; display: flex; gap: 9px; padding: 0 0 0 13px; align-items: flex-start; }
.ov-list > div { height: 25px; display: flex; align-items: center; overflow: visible; white-space: nowrap; }
.hd { background: #ebebeb; padding-left: 10px; }
.hd.l1 { padding-left: 20px; }
.hd.l2 { padding-left: 30px; }
.hd b { font-weight: 600; color: #2e2e2e; }
.hi { width: 16px; height: 16px; color: #777; margin-right: 7px; flex: none; }
.hi-aa { width: 16px; margin-right: 7px; color: #999; font-size: 12.500px; flex: none; }
.ck { gap: 8px; }
.ck.l1 { padding-left: 23px; }
.ck.l2 { padding-left: 33px; }
.ck.l3 { padding-left: 43px; }
```
